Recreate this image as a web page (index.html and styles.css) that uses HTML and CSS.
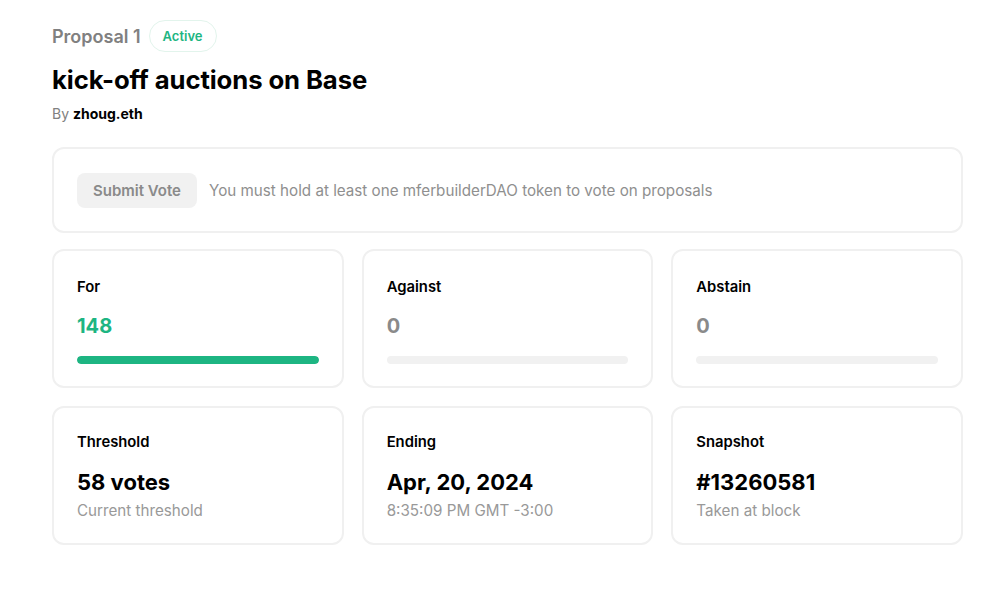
FILE: index.html
```html
<!DOCTYPE html>
<html>
<head>
<meta charset="utf-8">
<link rel="stylesheet" href="styles.css">
</head>
<body>
<main class="page">
  <div class="head">
    <span class="num">Proposal 1</span>
    <span class="badge">Active</span>
  </div>
  <h1 class="title">kick-off auctions on Base</h1>
  <div class="by">By <b>zhoug.eth</b></div>

  <section class="vote card">
    <button class="submit">Submit Vote</button>
    <span class="msg">You must hold at least one mferbuilderDAO token to vote on proposals</span>
  </section>

  <section class="grid">
    <div class="card stat">
      <div class="label">For</div>
      <div class="count green">148</div>
      <div class="bar"><div class="fill" style="width:100%"></div></div>
    </div>
    <div class="card stat">
      <div class="label">Against</div>
      <div class="count grey">0</div>
      <div class="bar"><div class="fill" style="width:0%"></div></div>
    </div>
    <div class="card stat">
      <div class="label">Abstain</div>
      <div class="count grey">0</div>
      <div class="bar"><div class="fill" style="width:0%"></div></div>
    </div>
    <div class="card info">
      <div class="label">Threshold</div>
      <div class="big">58 votes</div>
      <div class="sub">Current threshold</div>
    </div>
    <div class="card info">
      <div class="label">Ending</div>
      <div class="big">Apr, 20, 2024</div>
      <div class="sub">8:35:09 PM GMT -3:00</div>
    </div>
    <div class="card info">
      <div class="label">Snapshot</div>
      <div class="big">#13260581</div>
      <div class="sub">Taken at block</div>
    </div>
  </section>
</main>
</body>
</html>
```

FILE: styles.css
```css
* { box-sizing: border-box; }
body {
  margin: 0;
  background: #fff;
  font-family: Inter, "Noto Sans", sans-serif;
  color: #000;
}
.page {
  width: 911px;
  margin-left: 52px;
  padding-top: 20px;
}
.head {
  display: flex;
  align-items: center;
  gap: 8px;
  height: 32px;
}
.num {
  font-size: 18px;
  font-weight: 600;
  color: #808080;
}
.badge {
  height: 32px;
  padding: 0 13px;
  border: 1px solid #e2f4ec;
  border-radius: 16px;
  color: #1db582;
  font-size: 13px;
  font-weight: 600;
  display: flex;
  align-items: center;
}
.title {
  margin: 13px 0 0;
  font-size: 25.7px;
  font-weight: 700;
  line-height: 30px;
  letter-spacing: -0.1px;
}
.by {
  margin-top: 10px;
  font-size: 14px;
  color: #808080;
  line-height: 18px;
}
.by b { color: #000; font-weight: 700; }
.card {
  border: 2px solid #f0f0f0;
  border-radius: 12px;
  background: #fff;
}
.vote {
  margin-top: 24px;
  height: 86px;
  display: flex;
  align-items: center;
  padding: 0 23px;
  gap: 12px;
}
.submit {
  height: 35px;
  width: 120px;
  padding: 0;
  border: none;
  border-radius: 8px;
  background: #f1f1f1;
  color: #8a8a8a;
  font-family: inherit;
  font-size: 15px;
  font-weight: 600;
}
.msg {
  font-size: 15.2px;
  color: #8f8f8f;
}
.grid {
  margin-top: 16px;
  display: grid;
  grid-template-columns: repeat(3, 1fr);
  grid-auto-rows: 139px;
  column-gap: 18px;
  row-gap: 18px;
}
.stat {
  padding: 27px 23px 0;
}
.info {
  padding: 25px 23px 0;
}
.label {
  font-size: 14.8px;
  font-weight: 600;
  line-height: 18px;
}
.count {
  margin-top: 18px;
  font-size: 20px;
  font-weight: 700;
  line-height: 24px;
}
.green { color: #1db582; }
.grey { color: #8a8a8a; }
.bar {
  margin-top: 18px;
  height: 8px;
  border-radius: 4px;
  background: #f1f1f1;
  overflow: hidden;
}
.fill {
  height: 100%;
  background: #1db582;
  border-radius: 4px;
}
.big {
  margin-top: 17px;
  font-size: 22px;
  font-weight: 700;
  line-height: 28px;
}
.sub {
  margin-top: 6px;
  font-size: 15.2px;
  color: #999;
  line-height: 18px;
}
```
